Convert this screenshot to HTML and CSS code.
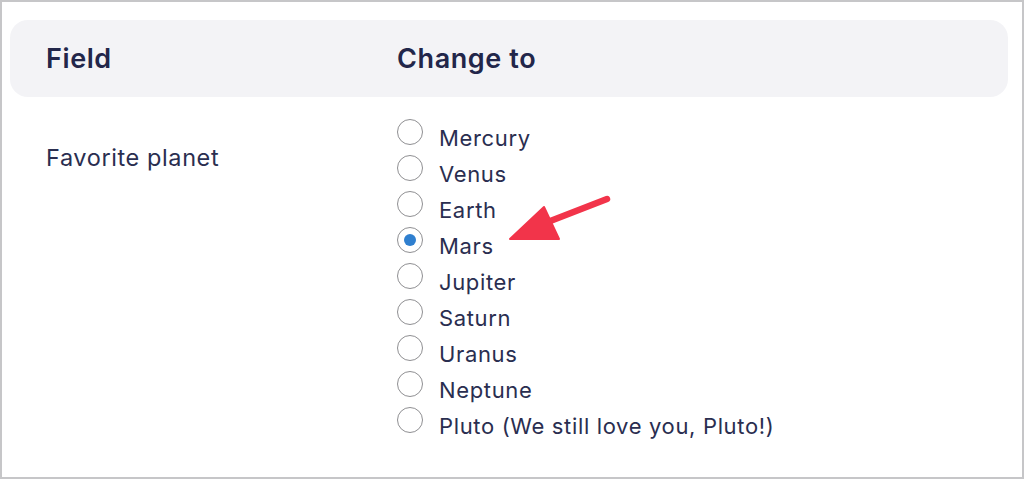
FILE: index.html
```html
<!DOCTYPE html>
<html lang="en">
<head>
<meta charset="utf-8">
<title>Change field</title>
<link rel="stylesheet" href="styles.css">
</head>
<body>
<div class="frame">
  <div class="head">
    <div class="head-cell">Field</div>
    <div class="head-cell">Change to</div>
  </div>
  <div class="row">
    <div class="field-name">Favorite planet</div>
    <div class="options">
      <label class="opt"><input type="radio" name="planet"><span>Mercury</span></label>
      <label class="opt"><input type="radio" name="planet"><span>Venus</span></label>
      <label class="opt"><input type="radio" name="planet"><span>Earth</span></label>
      <label class="opt"><input type="radio" name="planet" checked><span>Mars</span></label>
      <label class="opt"><input type="radio" name="planet"><span>Jupiter</span></label>
      <label class="opt"><input type="radio" name="planet"><span>Saturn</span></label>
      <label class="opt"><input type="radio" name="planet"><span>Uranus</span></label>
      <label class="opt"><input type="radio" name="planet"><span>Neptune</span></label>
      <label class="opt"><input type="radio" name="planet"><span>Pluto (We still love you, Pluto!)</span></label>
    </div>
  </div>
  <svg class="arrow" width="120" height="60" viewBox="0 0 120 60">
    <line x1="107" y1="9" x2="40" y2="35" stroke="#f2344a" stroke-width="6.5" stroke-linecap="round"/>
    <polygon points="10,49 44,17 59,49" fill="#f2344a" stroke="#f2344a" stroke-width="2" stroke-linejoin="round"/>
  </svg>
</div>
</body>
</html>
```
FILE: styles.css
```css
* { box-sizing: border-box; }
html, body { margin: 0; padding: 0; background: #fff; }
body {
  font-family: Inter, "Noto Sans", "Liberation Sans", sans-serif;
  color: #2a2e50;
}
.frame {
  position: relative;
  width: 1024px;
  height: 479px;
  border: 2px solid #c6c6c8;
  padding: 18px 14px 0 8px;
}
.head {
  display: grid;
  grid-template-columns: 351px 1fr;
  align-items: center;
  height: 77px;
  padding-left: 36px;
  background: #f3f3f6;
  border-radius: 18px;
  font-size: 27px;
  letter-spacing: 0.6px;
  font-weight: 600;
  color: #22264a;
}
.row {
  display: grid;
  grid-template-columns: 351px 1fr;
  padding-left: 36px;
  padding-top: 17px;
}
.field-name {
  font-size: 23.5px;
  letter-spacing: 0.6px;
  padding-top: 29px;
}
.options {
  display: flex;
  flex-direction: column;
}
.opt {
  display: flex;
  align-items: center;
  gap: 16px;
  height: 36px;
  font-size: 22px;
  letter-spacing: 0.65px;
}
.opt span {
  margin-top: 11px;
}
.opt input {
  appearance: none;
  -webkit-appearance: none;
  margin: 0;
  width: 26px;
  height: 26px;
  border-radius: 50%;
  border: 1.5px solid #8f8f92;
  background: #fff;
  display: grid;
  place-items: center;
  flex: none;
}
.opt input:checked::after {
  content: "";
  width: 12px;
  height: 12px;
  border-radius: 50%;
  background: #2f7fcf;
}
.arrow {
  position: absolute;
  left: 498px;
  top: 188px;
}
```
